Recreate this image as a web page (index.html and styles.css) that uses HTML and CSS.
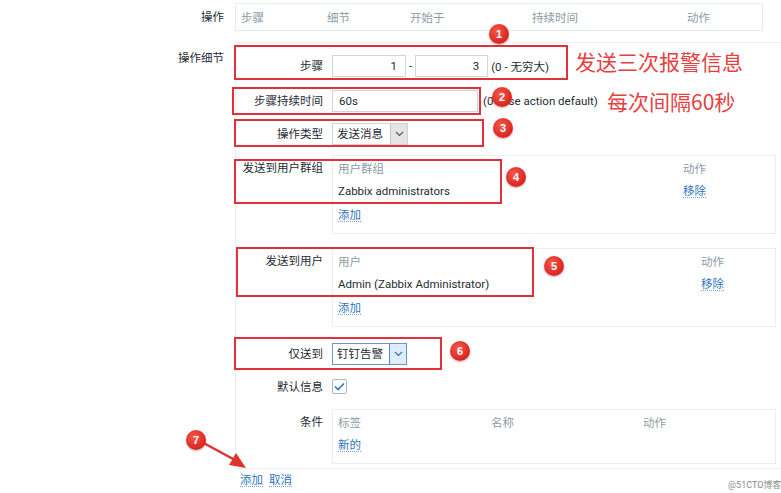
FILE: index.html
```html
<!DOCTYPE html>
<html lang="zh-CN">
<head>
<meta charset="utf-8">
<title>操作细节</title>
<link rel="stylesheet" href="styles.css">
</head>
<body>
<div class="page">
  <div class="frow top-row">
    <div class="flabel top-label">操作</div>
    <div class="ops-table">
      <span class="oc1">步骤</span><span class="oc2">细节</span><span class="oc3">开始于</span><span class="oc4">持续时间</span><span class="oc5">动作</span>
    </div>
  </div>

  <div class="frow details-row">
    <div class="flabel details-label">操作细节</div>
    <div class="details">
      <div class="irow">
        <div class="ilabel">步骤</div>
        <div class="ctrl">
          <div class="input num1">1</div>
          <span class="dash">-</span>
          <div class="input num2">3</div>
          <span class="hint">(0 - 无穷大)</span>
        </div>
      </div>

      <div class="irow mt13">
        <div class="ilabel">步骤持续时间</div>
        <div class="ctrl">
          <div class="input dur">60s</div>
          <span class="hint hint-dur">(0 - use action default)</span>
        </div>
      </div>

      <div class="irow mt11">
        <div class="ilabel">操作类型</div>
        <div class="ctrl">
          <div class="select">
            <span class="sel-text">发送消息</span>
            <span class="sel-btn"><svg width="9" height="6" viewBox="0 0 9 6"><polyline points="1,1 4.5,4.5 8,1" fill="none" stroke="#555" stroke-width="1.1"/></svg></span>
          </div>
        </div>
      </div>

      <div class="irow mt10">
        <div class="ilabel top">发送到用户群组</div>
        <div class="box">
          <div class="bhead"><span class="gcol1">用户群组</span><span>动作</span></div>
          <div class="brow"><span class="gcol1">Zabbix administrators</span><span><a class="link">移除</a></span></div>
          <div class="badd"><a class="link">添加</a></div>
        </div>
      </div>

      <div class="irow mt14">
        <div class="ilabel top">发送到用户</div>
        <div class="box">
          <div class="bhead"><span class="ucol1">用户</span><span>动作</span></div>
          <div class="brow"><span class="ucol1">Admin (Zabbix Administrator)</span><span><a class="link">移除</a></span></div>
          <div class="badd"><a class="link">添加</a></div>
        </div>
      </div>

      <div class="irow mt16">
        <div class="ilabel">仅送到</div>
        <div class="ctrl">
          <div class="select focused">
            <span class="sel-text">钉钉告警</span>
            <span class="sel-btn"><svg width="9" height="6" viewBox="0 0 9 6"><polyline points="1,1 4.5,4.5 8,1" fill="none" stroke="#3a6ea5" stroke-width="1.1"/></svg></span>
          </div>
        </div>
      </div>

      <div class="irow mt14 row-check">
        <div class="ilabel check-label">默认信息</div>
        <div class="ctrl">
          <span class="checkbox"><svg width="11" height="9" viewBox="0 0 11 9"><polyline points="1,4.5 4,7.5 10,1.5" fill="none" stroke="#2f74bd" stroke-width="1.6"/></svg></span>
        </div>
      </div>

      <div class="irow mt14">
        <div class="ilabel top">条件</div>
        <div class="box cond">
          <div class="bhead"><span class="ccol1">标签</span><span class="ccol2">名称</span><span>动作</span></div>
          <div class="brow"><a class="link">新的</a></div>
        </div>
      </div>
    </div>
  </div>

  <div class="frow buttons-row">
    <div></div>
    <div class="buttons"><a class="link">添加</a><a class="link">取消</a></div>
  </div>
</div>

<div class="annot a1"></div>
<div class="annot a2"></div>
<div class="annot a3"></div>
<div class="annot a4"></div>
<div class="annot a5"></div>
<div class="annot a6"></div>

<svg class="arrow" width="60" height="40" viewBox="0 0 60 40">
  <line x1="4" y1="3" x2="41" y2="23" stroke="#e0332f" stroke-width="2.5" stroke-linecap="round"/>
  <polygon points="52,31 35,28 42,16" fill="#e0332f"/>
</svg>

<div class="badge b1">1</div>
<div class="badge b2">2</div>
<div class="badge b3">3</div>
<div class="badge b4">4</div>
<div class="badge b5">5</div>
<div class="badge b6">6</div>
<div class="badge b7">7</div>

<div class="note n1">发送三次报警信息</div>
<div class="note n2">每次间隔60秒</div>

<div class="watermark">@51CTO博客</div>
</body>
</html>
```

FILE: styles.css
```css
html, body {
  margin: 0;
  padding: 0;
  background: #ffffff;
  overflow: hidden;
}
body {
  font-family: Roboto, "Noto Sans CJK SC", sans-serif;
  font-size: 11.5px;
  color: #1f2c33;
  width: 781px;
  height: 493px;
  position: relative;
}
.page {
  padding-top: 3px;
}
.frow {
  display: grid;
  grid-template-columns: 224px 1fr;
  column-gap: 11px;
}
.flabel {
  text-align: right;
}
.top-label {
  line-height: 28px;
}
.ops-table {
  width: 528px;
  height: 28px;
  box-sizing: border-box;
  border: 1px solid #e6ebee;
  display: flex;
  align-items: center;
  padding-left: 5px;
  color: #8d9ba5;
}
.ops-table span { display: inline-block; }
.oc1 { width: 86px; }
.oc2 { width: 83px; }
.oc3 { width: 122px; }
.oc4 { width: 155px; }

.details-row { margin-top: 11px; }
.details-label {
  padding-top: 7px;
  line-height: 18px;
}
.details {
  border: 1px solid #ebeef0;
  border-right: none;
  padding: 12px 5px 4px 0;
}
.irow {
  display: grid;
  grid-template-columns: 87px 1fr;
  column-gap: 9px;
}
.mt10 { margin-top: 10px; }
.mt11 { margin-top: 11px; }
.mt13 { margin-top: 13px; }
.mt14 { margin-top: 14px; }
.mt16 { margin-top: 16px; }
.ilabel {
  text-align: right;
  line-height: 22px;
}
.ilabel.top {
  line-height: 18px;
  padding-top: 4px;
}
.row-check .check-label { line-height: 16px; }
.ctrl {
  display: flex;
  align-items: center;
  height: 22px;
}
.row-check .ctrl { height: 15px; }
.input {
  height: 22px;
  box-sizing: border-box;
  border: 1px solid #cfd6db;
  line-height: 20px;
  padding: 0 8px;
  background: #fff;
}
.num1 { width: 74px; text-align: right; }
.num2 { width: 73px; text-align: right; }
.dur { width: 146px; padding: 0 6px; }
.dash { margin: 0 3px; }
.hint { margin-left: 3px; }
.hint-dur { margin-left: 5px; }

.select {
  width: 76px;
  height: 22px;
  box-sizing: border-box;
  border: 1px solid #cfd6db;
  display: flex;
}
.sel-text {
  flex: 1;
  padding-left: 4px;
  line-height: 20px;
}
.sel-btn {
  width: 16px;
  background: #e4e4e4;
  border-left: 1px solid #c8c8c8;
  display: flex;
  align-items: center;
  justify-content: center;
}
.select.focused {
  width: 75px;
  border-color: #6f95bd;
}
.select.focused .sel-btn {
  background: #ddeefa;
  border-left: 1px solid #4d89c8;
}
.checkbox {
  width: 15px;
  height: 15px;
  box-sizing: border-box;
  border: 1px solid #a9bac6;
  border-radius: 2px;
  display: flex;
  align-items: center;
  justify-content: center;
}

.box {
  border: 1px solid #ebeef0;
  padding: 2px 5px 5px 5px;
}
.box.cond { padding-bottom: 7px; }
.bhead {
  height: 22px;
  line-height: 22px;
  color: #8d9ba5;
  display: flex;
}
.brow {
  height: 22px;
  line-height: 22px;
  display: flex;
}
.badd {
  height: 26px;
  line-height: 26px;
}
.gcol1 { width: 345px; }
.ucol1 { width: 363px; }
.ccol1 { width: 153px; }
.ccol2 { width: 152px; }
.link {
  color: #2f74bd;
  text-decoration-line: underline;
  text-decoration-style: dotted;
  text-decoration-color: #7ea7d6;
  text-underline-offset: 2px;
  cursor: pointer;
}

.buttons-row { margin-top: 1px; }
.buttons {
  padding-left: 5px;
  line-height: 20px;
  display: flex;
  gap: 6px;
}

.annot {
  position: absolute;
  border: 2px solid #e2313a;
  box-sizing: border-box;
}
.a1 { left: 234px; top: 45px; width: 334px; height: 35px; }
.a2 { left: 232px; top: 87px; width: 249px; height: 28px; }
.a3 { left: 234px; top: 119px; width: 250px; height: 28px; }
.a4 { left: 234px; top: 159px; width: 268px; height: 45px; }
.a5 { left: 236px; top: 247px; width: 298px; height: 50px; }
.a6 { left: 234px; top: 337px; width: 208px; height: 33px; }

.badge {
  position: absolute;
  width: 20px;
  height: 20px;
  margin: -10px 0 0 -10px;
  border-radius: 50%;
  background: radial-gradient(circle at 40% 35%, #f4584c, #d9241e 70%);
  box-shadow: 0 1px 2px rgba(120, 0, 0, 0.35);
  color: #fff;
  font-family: "Liberation Sans", sans-serif;
  font-weight: bold;
  font-size: 11px;
  line-height: 20px;
  text-align: center;
}
.b1 { left: 499px; top: 34px; }
.b2 { left: 502px; top: 97px; }
.b3 { left: 503px; top: 128px; }
.b4 { left: 516px; top: 177px; }
.b5 { left: 554px; top: 266px; }
.b6 { left: 460px; top: 351px; }
.b7 { left: 196px; top: 440px; }

.note {
  position: absolute;
  color: #e6413f;
  font-family: "Noto Sans CJK SC", sans-serif;
  font-size: 21px;
  line-height: 24px;
  white-space: nowrap;
}
.n1 { left: 575px; top: 49px; }
.n2 { left: 607px; top: 89px; }

.arrow {
  position: absolute;
  left: 194px;
  top: 437px;
}

.watermark {
  position: absolute;
  left: 728px;
  top: 478px;
  font-size: 9px;
  color: #8a8a8a;
  white-space: nowrap;
}
```
